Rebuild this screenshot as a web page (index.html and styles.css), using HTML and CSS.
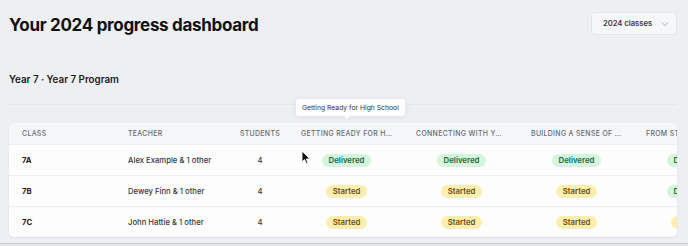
FILE: index.html
```html
<!DOCTYPE html>
<html>
<head>
  <meta charset="utf-8">
  <title>Progress dashboard</title>
  <link rel="stylesheet" href="styles.css">
</head>
<body>
  <div class="top">
    <h1>Your 2024 progress dashboard</h1>
    <button class="select">2024 classes
      <svg width="8" height="8" viewBox="0 0 8 8"><path d="M1 2.5 L4 5.5 L7 2.5" fill="none" stroke="#a3a7ae" stroke-width="0.9"/></svg>
    </button>
  </div>

  <h2>Year 7 · Year 7 Program</h2>
  <div class="rule"></div>

  <div class="card">
    <table>
      <colgroup>
        <col style="width:106px"><col style="width:116px"><col style="width:58px">
        <col style="width:115px"><col style="width:115px"><col style="width:115px"><col style="width:115px">
      </colgroup>
      <thead>
        <tr>
          <th>Class</th>
          <th>Teacher</th>
          <th class="c">Students</th>
          <th class="c"><span class="cut">Getting Ready for High School</span></th>
          <th class="c"><span class="cut">Connecting with your peers</span></th>
          <th class="c"><span class="cut">Building a sense of belonging</span></th>
          <th class="c"><span class="cut">From strength to strength</span></th>
        </tr>
      </thead>
      <tbody>
        <tr>
          <td class="cls">7A</td>
          <td>Alex Example &amp; 1 other</td>
          <td class="c">4</td>
          <td class="c"><span class="badge done">Delivered</span></td>
          <td class="c"><span class="badge done">Delivered</span></td>
          <td class="c"><span class="badge done">Delivered</span></td>
          <td class="c"><span class="badge done">Delivered</span></td>
        </tr>
        <tr>
          <td class="cls">7B</td>
          <td>Dewey Finn &amp; 1 other</td>
          <td class="c">4</td>
          <td class="c"><span class="badge start">Started</span></td>
          <td class="c"><span class="badge start">Started</span></td>
          <td class="c"><span class="badge start">Started</span></td>
          <td class="c"><span class="badge done">Delivered</span></td>
        </tr>
        <tr>
          <td class="cls">7C</td>
          <td>John Hattie &amp; 1 other</td>
          <td class="c">4</td>
          <td class="c"><span class="badge start">Started</span></td>
          <td class="c"><span class="badge start">Started</span></td>
          <td class="c"><span class="badge start">Started</span></td>
          <td class="c"><span class="badge start">Started</span></td>
        </tr>
      </tbody>
    </table>
  </div>

  <div class="tip">Getting Ready for High School</div>

  <svg class="cursor" width="10" height="15" viewBox="0 0 10 15">
    <path d="M1 1 L1 12 L3.6 9.6 L5.4 13.6 L7 12.9 L5.3 9 L8.8 9 Z" fill="#111" stroke="#fff" stroke-width="0.9" stroke-linejoin="round"/>
  </svg>

  <div class="bottom"></div>
</body>
</html>
```

FILE: styles.css
```css
body {
  margin: 0;
  padding: 0 11px 0 9px;
  background: #eeeff2;
  font-family: Inter, "Noto Sans", sans-serif;
  color: #2b2d31;
  height: 246px;
  overflow: hidden;
  position: relative;
}
.top {
  display: flex;
  justify-content: space-between;
  align-items: flex-start;
  padding-top: 12px;
}
h1 {
  margin: 2px 0 0;
  font-size: 17px;
  line-height: 22px;
  font-weight: 700;
  letter-spacing: -0.3px;
  color: #111;
}
.select {
  box-sizing: border-box;
  display: flex;
  align-items: center;
  gap: 9px;
  height: 23px;
  width: 86px;
  padding: 0 0 0 11px;
  background: #f6f7f9;
  border: 1px solid #e4e6ea;
  border-radius: 4px;
  font-family: Inter, sans-serif;
  font-size: 7.6px;
  font-weight: 600;
  color: #3a3c40;
}
h2 {
  margin: 37px 0 0;
  font-size: 9.8px;
  line-height: 14px;
  font-weight: 600;
  color: #1a1b1e;
}
.rule {
  margin-top: 17px;
  height: 1px;
  background: #e6e7ea;
}
.card {
  margin-top: 18px;
  background: #fdfdfe;
  border-radius: 5px;
  box-shadow: 0 1px 2px rgba(0,0,0,0.08);
  overflow: hidden;
}
table {
  width: 740px;
  table-layout: fixed;
  border-collapse: collapse;
}
th {
  height: 21px;
  padding: 0 0 0 13px;
  background: #f5f6f8;
  text-align: left;
  font-size: 6.9px;
  font-weight: 500;
  letter-spacing: 0.35px;
  text-transform: uppercase;
  color: #676a72;
  white-space: nowrap;
}
td {
  height: 30px;
  padding: 0 0 0 13px;
  font-size: 7.7px;
  font-weight: 500;
  color: #35373b;
  border-top: 1px solid #eceef1;
  white-space: nowrap;
}
th.c, td.c {
  text-align: center;
  padding: 0;
}
thead tr th { border-bottom: 1px solid #eceef1; }
.cut {
  display: inline-block;
  max-width: 91px;
  overflow: hidden;
  text-overflow: ellipsis;
  vertical-align: middle;
}
.cls {
  font-weight: 700;
  color: #1f2023;
}
.badge {
  display: inline-block;
  padding: 0 7px;
  height: 13px;
  line-height: 13px;
  border-radius: 7px;
  font-size: 7.8px;
  font-weight: 600;
}
.done {
  background: #d4f4dc;
  color: #23683b;
}
.start {
  background: #fbeeae;
  color: #6a4f17;
}
.tip {
  position: absolute;
  left: 296px;
  top: 99px;
  height: 17px;
  line-height: 17px;
  padding: 0 6px;
  background: #fff;
  border-radius: 3px;
  font-size: 6.8px;
  color: #333;
  box-shadow: 0 1px 6px rgba(0,0,0,0.08);
}
.tip::after {
  content: "";
  position: absolute;
  left: 48px;
  top: 17px;
  border: 3px solid transparent;
  border-top-color: #fff;
}
.cursor {
  position: absolute;
  left: 301px;
  top: 150px;
}
.bottom {
  position: absolute;
  left: 0;
  right: 0;
  top: 243px;
  height: 3px;
  border-top: 1px solid #c9cacd;
  background: #e4e5e8;
}
```
